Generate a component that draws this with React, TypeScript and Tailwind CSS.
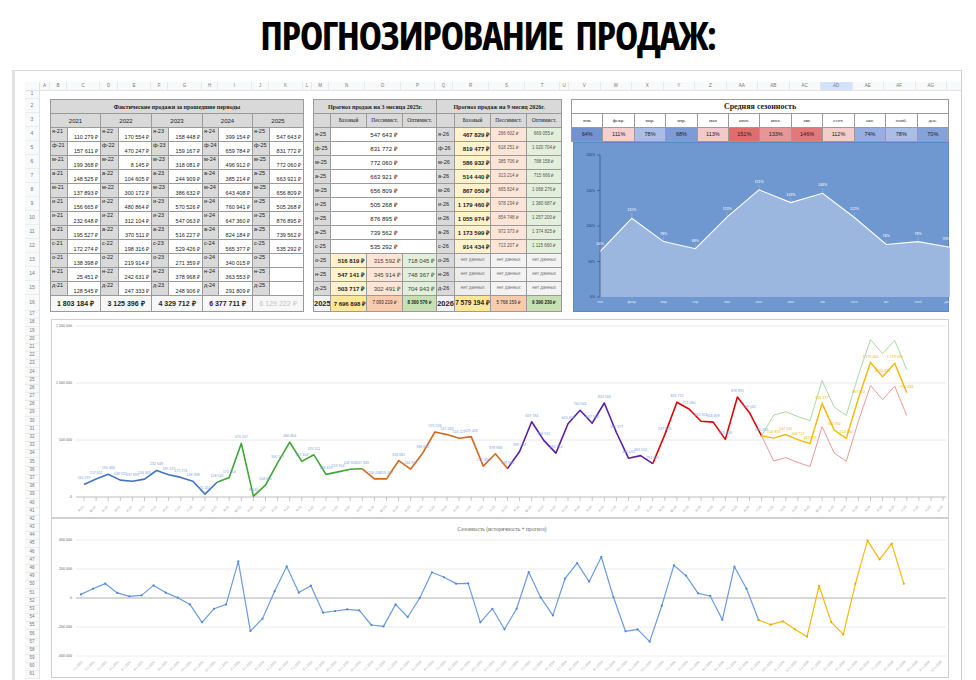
import { Fragment } from "react"

const MONTHS = ["я", "ф", "м", "а", "м", "и", "и", "а", "с", "о", "н", "д"]
const YEARS = ["2021", "2022", "2023", "2024", "2025"]

// actual sales, one row per year
const ACTUAL: number[][] = [
  [110279, 157611, 199368, 148525, 137893, 156665, 232648, 195527, 172274, 138398, 25451, 128545],
  [170554, 470247, 8145, 104605, 300172, 480864, 312104, 370511, 198316, 219914, 242631, 247333],
  [158448, 159167, 318081, 244909, 386632, 570526, 547063, 516227, 529426, 271359, 378968, 248906],
  [399154, 659784, 496912, 385214, 643408, 760941, 647360, 824184, 565377, 340015, 363553, 291809],
  [547643, 831772, 772060, 663921, 656809, 505268, 876895, 739562, 535292],
]
const TOTALS = ["1 803 184 ₽", "3 125 396 ₽", "4 329 712 ₽", "6 377 711 ₽", "6 129 222 ₽"]

const BASE = [516819, 547141, 503717, 467829, 819477, 586932, 514440, 867050, 1179460, 1055974, 1173599, 914434]
const PESS = [315592, 345914, 302491, 266602, 618251, 385706, 313214, 665824, 978234, 854748, 972373, 713207]
const OPT = [718045, 748367, 704943, 669055, 1020704, 788158, 715666, 1068276, 1380687, 1257200, 1374825, 1115660]

const SEASON_M = ["янв.", "февр.", "мар.", "апр.", "мая", "июн.", "июл.", "авг.", "сент.", "окт.", "нояб.", "дек."]
const SEASON_V = [64, 111, 78, 68, 113, 151, 133, 146, 112, 74, 78, 70]
const SEASON_BG = [
  "bg-[#7393d0]", "bg-[#f6cfcf]", "bg-[#a9bee7]", "bg-[#7d9bd6]", "bg-[#f4c9c9]", "bg-[#e06c6c]",
  "bg-[#e89595]", "bg-[#e37878]", "bg-[#f5cccc]", "bg-[#96aee2]", "bg-[#a9bee7]", "bg-[#86a2da]",
]

// deviation series (thousands)
const DEV = [25, 64, 99, 35, 12, 18, 87, 37, 2, -44, -168, -74, -44, 253, -228, -143, 46, 218, 37, 85, -101, -90, -78, -85, -186, -196, -44, -131, 0, 177, 143, 99, 101, -168, -74, -216, -74, 179, 2, -120, 133, 241, 113, 283, 7, -230, -216, -301, -53, 225, 154, 32, 14, -150, 216, 64, -152, -184, -161, -216, -267, 83, -166, -251, 99, 396, 267, 375, 99]

const COLS: [string, string][] = [
  ["A", "w-[10px]"], ["B", "w-[17px]"], ["C", "w-[33px]"], ["D", "w-[18px]"], ["E", "w-[33px]"], ["F", "w-[17px]"],
  ["G", "w-[34px]"], ["H", "w-[16px]"], ["I", "w-[34px]"], ["J", "w-[17px]"], ["K", "w-[34px]"], ["L", "w-[9px]"],
  ["M", "w-[17px]"], ["N", "w-[36px]"], ["O", "w-[36px]"], ["P", "w-[34px]"], ["Q", "w-[18px]"], ["R", "w-[36px]"],
  ["S", "w-[36px]"], ["T", "w-[35px]"], ["U", "w-[9px]"], ["V", "w-[31.5px]"], ["W", "w-[31.5px]"], ["X", "w-[31.5px]"],
  ["Y", "w-[31.5px]"], ["Z", "w-[31.5px]"], ["AA", "w-[31.5px]"], ["AB", "w-[31.5px]"], ["AC", "w-[31.5px]"],
  ["AD", "w-[31.5px]"], ["AE", "w-[31.5px]"], ["AF", "w-[31.5px]"], ["AG", "w-[31.5px]"],
]

const fmt = (n: number) => Math.round(n).toString().replace(/\B(?=(\d{3})+(?!\d))/g, " ")

const B = "border border-[#9a9a9a] whitespace-nowrap overflow-hidden"

function FactTable() {
  return (
    <table className="border-collapse table-fixed w-[253px] leading-none text-[#222]">
      <colgroup>
        <col className="w-[17px]" /><col className="w-[33px]" /><col className="w-[18px]" /><col className="w-[33px]" />
        <col className="w-[17px]" /><col className="w-[34px]" /><col className="w-[16px]" /><col className="w-[34px]" />
        <col className="w-[17px]" /><col className="w-[34px]" />
      </colgroup>
      <tbody>
        <tr className="h-[14px]">
          <td colSpan={10} className={`${B} bg-[#d9d9d9] text-center font-bold text-[6px] font-['Liberation_Serif',serif]`}>
            Фактические продажи за прошедшие периоды
          </td>
        </tr>
        <tr className="h-[14px]">
          {YEARS.map((y) => (
            <td key={y} colSpan={2} className={`${B} bg-[#d9d9d9] text-center text-[6px]`}>{y}</td>
          ))}
        </tr>
        {MONTHS.map((m, r) => (
          <tr key={r} className="h-[14px]">
            {YEARS.map((y, c) => {
              const v = ACTUAL[c][r]
              return (
                <Fragment key={y}>
                  <td className={`${B} bg-[#d9d9d9] align-top text-left pl-[1px] pt-[1px] text-[5.5px]`}>{m}-{y.slice(2)}</td>
                  <td className={`${B} bg-white align-bottom text-right pr-[2px] pb-[1px] text-[5.5px]`}>
                    {v !== undefined ? `${fmt(v)} ₽` : ""}
                  </td>
                </Fragment>
              )
            })}
          </tr>
        ))}
        <tr className="h-[16px]">
          {TOTALS.map((t, i) => (
            <td key={t} colSpan={2} className={`${B} bg-[#f7f7f7] text-center font-bold text-[7px] ${i === 4 ? "text-[#c4c4c4] font-normal" : ""}`}>
              {t}
            </td>
          ))}
        </tr>
      </tbody>
    </table>
  )
}

function ForecastTable() {
  const head = "bg-[#d9d9d9] text-center text-[5.5px] font-['Liberation_Serif',serif]"
  const lab = `${B} bg-[#d9d9d9] text-left pl-[1px] text-[5.5px]`
  return (
    <table className="border-collapse table-fixed w-[248px] leading-none text-[#222]">
      <colgroup>
        <col className="w-[17px]" /><col className="w-[36px]" /><col className="w-[36px]" /><col className="w-[34px]" />
        <col className="w-[18px]" /><col className="w-[36px]" /><col className="w-[36px]" /><col className="w-[35px]" />
      </colgroup>
      <tbody>
        <tr className="h-[14px]">
          <td colSpan={4} className={`${B} bg-[#d9d9d9] text-center font-bold text-[6px] font-['Liberation_Serif',serif]`}>
            Прогноз продаж на 3 месяца 2025г.
          </td>
          <td colSpan={4} className={`${B} bg-[#d9d9d9] text-center font-bold text-[6px] font-['Liberation_Serif',serif]`}>
            Прогноз продаж на 9 месяц 2026г.
          </td>
        </tr>
        <tr className="h-[14px]">
          {[0, 1].map((k) => (
            <Fragment key={k}>
              <td className={`${B} ${head}`}></td>
              <td className={`${B} ${head}`}>Базовый</td>
              <td className={`${B} ${head}`}>Пессимист.</td>
              <td className={`${B} ${head}`}>Оптимист.</td>
            </Fragment>
          ))}
        </tr>
        {MONTHS.map((m, r) => (
          <tr key={r} className="h-[14px]">
            <td className={lab}>{m}-25</td>
            {r < 9 ? (
              <td colSpan={3} className={`${B} bg-white text-center text-[6px]`}>{fmt(ACTUAL[4][r])} ₽</td>
            ) : (
              <>
                <td className={`${B} bg-[#fff2cc] text-right pr-[2px] font-bold text-[6px]`}>{fmt(BASE[r - 9])} ₽</td>
                <td className={`${B} bg-[#fce4d6] text-right pr-[2px] text-[6px] text-[#444]`}>{fmt(PESS[r - 9])} ₽</td>
                <td className={`${B} bg-[#e2efda] text-right pr-[2px] text-[6px] text-[#444]`}>{fmt(OPT[r - 9])} ₽</td>
              </>
            )}
            <td className={lab}>{m}-26</td>
            {r < 9 ? (
              <>
                <td className={`${B} bg-[#fff2cc] text-right pr-[1px] font-bold text-[6px]`}>{fmt(BASE[r + 3])} ₽</td>
                <td className={`${B} bg-[#fce4d6] text-center text-[4.5px] text-[#555]`}>{fmt(PESS[r + 3])} ₽</td>
                <td className={`${B} bg-[#e2efda] text-center text-[4.5px] text-[#555]`}>{fmt(OPT[r + 3])} ₽</td>
              </>
            ) : (
              <>
                <td className={`${B} bg-[#ededed] text-center text-[4.5px] text-[#777]`}>нет данных</td>
                <td className={`${B} bg-[#f3f3f3] text-center text-[4.5px] text-[#777]`}>нет данных</td>
                <td className={`${B} bg-[#f3f3f3] text-center text-[4.5px] text-[#777]`}>нет данных</td>
              </>
            )}
          </tr>
        ))}
        <tr className="h-[16px]">
          <td className={`${B} bg-[#f2f2f2] text-center font-bold text-[7.5px]`}>2025</td>
          <td className={`${B} bg-[#ffe699] text-right pr-[1px] font-bold text-[6px]`}>7 696 898 ₽</td>
          <td className={`${B} bg-[#f8cbad] text-center text-[4.5px]`}>7 093 219 ₽</td>
          <td className={`${B} bg-[#c6e0b4] text-center font-bold text-[4.5px]`}>8 300 576 ₽</td>
          <td className={`${B} bg-[#f2f2f2] text-center font-bold text-[7.5px]`}>2026</td>
          <td className={`${B} bg-[#ffe699] text-center font-bold text-[6.5px]`}>7 579 194 ₽</td>
          <td className={`${B} bg-[#f8cbad] text-center text-[4.5px]`}>5 768 159 ₽</td>
          <td className={`${B} bg-[#c6e0b4] text-center font-bold text-[4.5px]`}>9 390 230 ₽</td>
        </tr>
      </tbody>
    </table>
  )
}

function SeasonBlock() {
  const X = (i: number) => 26 + i * 31.8
  const Y = (v: number) => 154 - v * 0.71
  const line = SEASON_V.map((v, i) => `${X(i).toFixed(1)},${Y(v).toFixed(1)}`).join(" ")
  const area = `26,154 ${line} ${X(11).toFixed(1)},154`
  return (
    <div className="w-[378px] flex flex-col">
      <table className="border-collapse table-fixed w-[378px] leading-none text-[#222] font-['Liberation_Serif',serif]">
        <tbody>
          <tr className="h-[14px]">
            <td colSpan={12} className={`${B} bg-white text-center font-bold text-[8px]`}>Средняя сезонность</td>
          </tr>
          <tr className="h-[14px]">
            {SEASON_M.map((m) => (
              <td key={m} className={`${B} bg-white text-center text-[5px]`}>{m}</td>
            ))}
          </tr>
          <tr className="h-[14px]">
            {SEASON_V.map((v, i) => (
              <td key={i} className={`${B} ${SEASON_BG[i]} text-center text-[5.5px] font-['Liberation_Sans',sans-serif]`}>{v}%</td>
            ))}
          </tr>
        </tbody>
      </table>
      <div className="h-[170px] bg-[#6f98d1] border border-[#5d86c2] ml-[2px]">
        <svg width="376" height="168" className="block font-['Liberation_Sans',sans-serif]">
          <polygon points={area} fill="#9bb7df" />
          <polyline points={line} fill="none" stroke="#ffffff" strokeWidth="1.1" />
          <line x1="26" y1="12" x2="26" y2="154" stroke="#2d4a7a" strokeWidth="0.7" />
          {[0, 50, 100, 150, 200].map((v) => (
            <g key={v}>
              <line x1="23" x2="26" y1={Y(v)} y2={Y(v)} stroke="#2d4a7a" strokeWidth="0.6" />
              <text x="21" y={Y(v) + 1.2} fontSize="3.4" textAnchor="end" fill="#1f3864">{v}%</text>
            </g>
          ))}
          {SEASON_V.map((v, i) => (
            <g key={i}>
              <line x1={X(i)} x2={X(i)} y1={Y(v) - 1} y2={Y(v) - 5} stroke="#c9d8ef" strokeWidth="0.3" />
              <text x={X(i)} y={Y(v) - 7} fontSize="3.6" textAnchor={i === 11 ? "end" : "middle"} fill="#ffffff">{v}%</text>
              <text x={X(i)} y="160" fontSize="3.4" textAnchor={i === 11 ? "end" : "middle"} fill="#dfe8f6">{SEASON_M[i].replace(".", "")}</text>
            </g>
          ))}
        </svg>
      </div>
    </div>
  )
}

function SalesChart() {
  const X = (i: number) => 32 + i * 12.1
  const Y = (v: number) => 177 - v * 0.000114
  const all = ACTUAL.flat()
  const seg = (arr: number[], start: number) =>
    arr.map((v, k) => `${X(start + k).toFixed(1)},${Y(v).toFixed(1)}`).join(" ")
  const colors = ["#4472c4", "#3fa535", "#d2691e", "#5b1fa6", "#e00000"]
  const last = all[56]
  return (
    <svg width="898" height="199" className="block font-['Liberation_Sans',sans-serif]">
      {[500000, 1000000, 1500000].map((v) => (
        <line key={v} x1="24" x2="894" y1={Y(v)} y2={Y(v)} stroke="#e2e2e2" strokeWidth="0.8" />
      ))}
      {[0, 500000, 1000000, 1500000].map((v) => (
        <text key={v} x="20" y={Y(v) + 1.2} fontSize="3.6" textAnchor="end" fill="#666">{fmt(v)}</text>
      ))}
      <line x1="24" x2="894" y1="177" y2="177" stroke="#a0a0a0" strokeWidth="0.7" />
      {Array.from({ length: 72 }, (_, i) => (
        <g key={i}>
          <line x1={X(i)} x2={X(i)} y1="177" y2="181" stroke="#a0a0a0" strokeWidth="0.6" />
          <text
            x={X(i)}
            y="187"
            fontSize="3.4"
            textAnchor="end"
            fill="#999"
            transform={`rotate(-45 ${X(i)} 187)`}
          >
            {MONTHS[i % 12]}-{21 + Math.floor(i / 12)}
          </text>
        </g>
      ))}
      {colors.map((c, y) => {
        const start = Math.max(0, y * 12 - 1)
        const end = Math.min(y * 12 + 11, 56)
        return <polyline key={c} points={seg(all.slice(start, end + 1), start)} fill="none" stroke={c} strokeWidth="1.6" strokeLinejoin="round" />
      })}
      <polyline points={seg([last, ...OPT], 56)} fill="none" stroke="#a9d9a0" strokeWidth="1" />
      <polyline points={seg([last, ...PESS], 56)} fill="none" stroke="#e99a9a" strokeWidth="1" />
      <polyline points={seg([last, ...BASE], 56)} fill="none" stroke="#f5b800" strokeWidth="1.4" />
      {all.map((v, i) => (
        <text key={i} x={X(i)} y={Y(v) - 5} fontSize="3.6" textAnchor="middle" fill="#7aa2e3">{fmt(v)}</text>
      ))}
      {BASE.map((v, k) => (
        <text key={k} x={X(57 + k)} y={Y(v) - 5} fontSize="3.6" textAnchor="middle" fill="#f0b400">{fmt(v)}</text>
      ))}
    </svg>
  )
}

function DevChart() {
  const X = (i: number) => 29 + i * 12.1
  const Y = (k: number) => 79 - (k * 29) / 200
  const blue = DEV.slice(0, 57)
  const yellow = DEV.slice(56)
  const pts = (arr: number[], start: number) =>
    arr.map((v, k) => `${X(start + k).toFixed(1)},${Y(v).toFixed(1)}`).join(" ")
  return (
    <svg width="898" height="160" className="block font-['Liberation_Sans',sans-serif]">
      <text x="450" y="12" fontSize="5.5" textAnchor="middle" fill="#666" fontFamily="Liberation Serif, serif">
        Сезонность (историчность + прогноз)
      </text>
      {[400, 200, 0, -200, -400].map((v) => (
        <g key={v}>
          <line x1="24" x2="894" y1={Y(v)} y2={Y(v)} stroke={v === 0 ? "#9a9a9a" : "#e6e6e6"} strokeWidth="0.8" />
          <text x="20" y={Y(v) + 1.2} fontSize="3.6" textAnchor="end" fill="#666">{v === 0 ? "0" : `${v < 0 ? "-" : ""}${Math.abs(v)} 000`}</text>
        </g>
      ))}
      {Array.from({ length: 72 }, (_, i) => (
        <text
          key={i}
          x={X(i) + 2}
          y="143"
          fontSize="3.2"
          textAnchor="end"
          fill="#999"
          transform={`rotate(-45 ${X(i) + 2} 143)`}
        >
          {(i % 12) + 1}.1.{2021 + Math.floor(i / 12)}
        </text>
      ))}
      <polyline points={pts(blue, 0)} fill="none" stroke="#6a9be0" strokeWidth="1.2" strokeLinejoin="round" />
      <polyline points={pts(yellow, 56)} fill="none" stroke="#f5b90a" strokeWidth="1.2" strokeLinejoin="round" />
      {blue.map((v, i) => (
        <circle key={i} cx={X(i)} cy={Y(v)} r="1.1" fill="#4f86d8" />
      ))}
      {yellow.map((v, k) => (
        <circle key={k} cx={X(56 + k)} cy={Y(v)} r="1.1" fill="#e8aa00" />
      ))}
    </svg>
  )
}

export default function App() {
  const rows: { n: number; h: string; t: string }[] = []
  rows.push({ n: 1, h: "h-[8px]", t: "text-[4.5px]" })
  for (let n = 2; n <= 15; n++) rows.push({ n, h: "h-[14px]", t: "text-[5px]" })
  rows.push({ n: 16, h: "h-[16px]", t: "text-[5px]" })
  for (let n = 17; n <= 61; n++) rows.push({ n, h: "h-[8.2px]", t: "text-[4.5px]" })

  return (
    <div className="w-[976px] h-[680px] overflow-hidden bg-white font-['Liberation_Sans',sans-serif]">
      <div className="h-[70px] flex items-center justify-center">
        <h1 className="text-[40px] leading-none font-bold font-stretch-condensed tracking-[-1.5px] [word-spacing:7px] text-black font-['Open_Sans','DejaVu_Sans_Condensed',sans-serif]">
          ПРОГНОЗИРОВАНИЕ ПРОДАЖ:
        </h1>
      </div>
      <div className="ml-[12px] w-[950px] h-[620px] border-t border-t-[#d4d4d4] border-l-[3px] border-l-[#e2e2e2] border-r border-r-[#cfcfcf] pl-[10px] pt-[11px]">
        {/* column letters */}
        <div className="flex h-[9px] bg-[#f8f9fa] border-b border-[#e3e3e3]">
          <div className="w-[15px] border-r border-[#e3e3e3]" />
          {COLS.map(([l, w]) => (
            <div
              key={l}
              className={`${w} shrink-0 border-r border-[#e8e8e8] flex items-center justify-center text-[4.5px] text-[#777] ${l === "AD" ? "bg-[#d3e3fd] text-[#333]" : ""}`}
            >
              {l}
            </div>
          ))}
          <div className="flex-1" />
        </div>
        <div className="flex">
          {/* row numbers */}
          <div className="w-[15px] shrink-0 flex flex-col bg-[#f8f9fa] border-r border-[#e3e3e3]">
            {rows.map((r) => (
              <div key={r.n} className={`${r.h} shrink-0 border-b border-[#ececec] flex items-center justify-center ${r.t} text-[#777]`}>
                {r.n}
              </div>
            ))}
          </div>
          {/* sheet content */}
          <div className="flex flex-col">
            <div className="h-[8px]" />
            <div className="flex items-start gap-[9px] pl-[10px]">
              <FactTable />
              <ForecastTable />
              <SeasonBlock />
            </div>
            <div className="mt-[7px] ml-[11px] w-[898px] flex flex-col">
              <div className="h-[199px] border border-[#d0d0d0] bg-white">
                <SalesChart />
              </div>
              <div className="h-[160px] border border-[#d0d0d0] bg-white">
                <DevChart />
              </div>
            </div>
          </div>
        </div>
      </div>
    </div>
  )
}
